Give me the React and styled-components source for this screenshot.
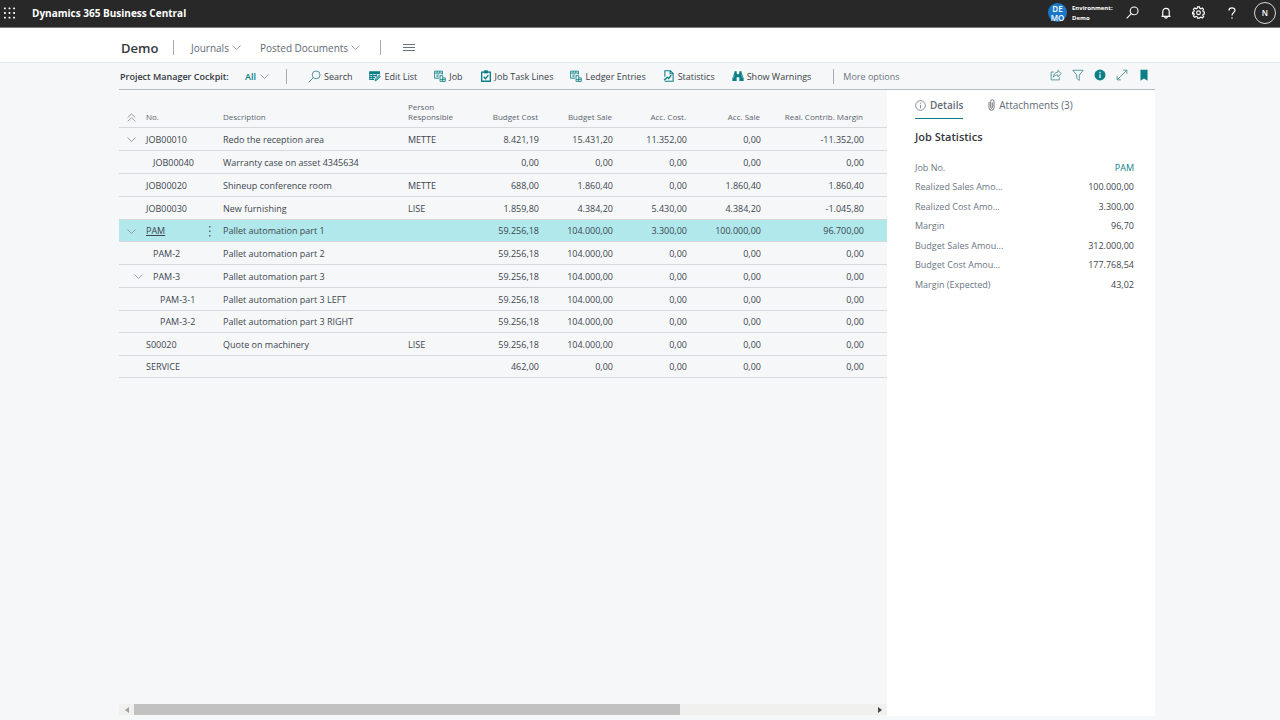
import React from "react";
import styled, { createGlobalStyle } from "styled-components";

const teal = "#0b7f86";
const grid = "#d5d8dc";

const GlobalStyle = createGlobalStyle`
  * { box-sizing: border-box; }
  body {
    margin: 0;
    background: #f5f7f9;
    color: #40464d;
    font-family: "Open Sans", "Noto Sans", sans-serif;
    font-size: 9px;
  }
  button {
    margin: 0;
    padding: 0;
    border: 0;
    background: none;
    color: inherit;
    font: inherit;
    cursor: pointer;
  }
`;

const Page = styled.div`
  display: flex;
  flex-direction: column;
  min-height: 100vh;
`;

const TopBar = styled.header`
  display: flex;
  align-items: center;
  height: 28px;
  padding: 0 4px 2px;
  background: #282828;
  border-bottom: 1px solid #77797b;
  color: #fff;
`;

const TopButton = styled.button`
  display: flex;
  align-items: center;
  justify-content: center;
  width: ${(p) => p.$width || 33}px;
  height: 24px;
`;

const Product = styled.h1`
  flex: 1;
  margin: 0 0 0 17px;
  font-size: 10px;
  line-height: 16px;
  font-weight: 700;
`;

const EnvBadge = styled.span`
  display: flex;
  flex-direction: column;
  align-items: center;
  justify-content: center;
  width: 19px;
  height: 19px;
  margin-right: 5px;
  border-radius: 50%;
  background: #1b78c8;
  font-size: 8px;
  line-height: 9px;
  font-weight: 600;
`;

const EnvText = styled.span`
  width: 44px;
  font-size: 6px;
  line-height: 10px;
  font-weight: 700;
`;

const Avatar = styled.button`
  width: 22px;
  height: 22px;
  margin-left: 6px;
  border: 1px solid #d8d8d8;
  border-radius: 50%;
  font-size: 8px;
  font-weight: 600;
`;

const NavBar = styled.nav`
  display: flex;
  align-items: center;
  height: 35px;
  padding: 5px 120px 0 121px;
  background: #fff;
  border-bottom: 1px solid #e6e9ec;
  color: #5f6a75;
  font-size: 10px;
`;

const Company = styled.span`
  width: 52px;
  color: #33383d;
  font-size: 13px;
  font-weight: 600;
`;

const Divider = styled.span`
  width: 1px;
  height: 15px;
  margin: 0 ${(p) => p.$gap}px 0 0;
  background: #a6abb1;
`;

const NavButton = styled.button`
  display: flex;
  align-items: center;
  gap: 3px;
  margin-right: ${(p) => p.$after || 0}px;
`;

const Main = styled.main`
  flex: 1;
  display: flex;
  flex-direction: column;
  padding: 0 125px 4px 119px;
`;

const Toolbar = styled.div`
  display: flex;
  align-items: center;
  height: 27px;
  border-bottom: 1px solid #b4bbc2;
  white-space: nowrap;
`;

const PageTitle = styled.span`
  width: 126px;
  padding-left: 1px;
  color: #33383d;
  font-weight: 600;
`;

const ViewButton = styled.button`
  display: flex;
  align-items: center;
  gap: 4px;
  margin-right: 17px;
  color: ${teal};
  font-weight: 600;
`;

const Actions = styled.div`
  display: flex;
  align-items: center;
  flex: 1;
`;

const ActionList = styled.div`
  display: flex;
  align-items: center;
  gap: ${(p) => p.$gap}px;
`;

const Action = styled.button`
  display: flex;
  align-items: center;
  gap: 3px;
  color: #3b4147;
`;

const MoreAction = styled.button`
  margin-left: 22px;
  padding-left: 9px;
  border-left: 1px solid #a6abb1;
  line-height: 15px;
  color: #6b747d;
`;

const PageTools = styled(ActionList)`
  padding: 0 5px 3px 0;
`;

const Content = styled.div`
  flex: 1;
  display: flex;
`;

const ListArea = styled.section`
  flex: 1;
  display: flex;
  flex-direction: column;
  justify-content: space-between;
  min-width: 0;
`;

const JobTable = styled.table`
  width: 100%;
  table-layout: fixed;
  border-collapse: separate;
  border-spacing: 0;
  line-height: 12px;
`;

const Col = styled.col`
  width: ${(p) => (p.$width ? `${p.$width}px` : "auto")};
`;

const Head = styled.th`
  height: 38px;
  padding: 0 ${(p) => (p.$right ? 1 : 0)}px 5px 0;
  border-bottom: 1px solid ${grid};
  color: #5c656e;
  font-size: 8px;
  line-height: 10px;
  font-weight: 400;
  text-align: ${(p) => (p.$right ? "right" : "left")};
  vertical-align: bottom;
  white-space: nowrap;
`;

const Row = styled.tr`
  height: 23px;
  background: ${(p) => (p.$selected ? "#b0e8eb" : "transparent")};
  &:nth-child(4n + 5), &:last-child { height: 22px; }
`;

const Cell = styled.td`
  padding: 1px 0 0;
  border-bottom: 1px solid ${grid};
  text-align: ${(p) => (p.$right ? "right" : "left")};
  white-space: nowrap;
`;

const Toggle = styled.button`
  display: block;
  margin-left: ${(p) => 8 + p.$level * 7}px;
  line-height: 0;
`;

const NumberCell = styled.div`
  display: flex;
  align-items: center;
  justify-content: space-between;
  padding: 0 12px 0 ${(p) => p.$level * 7}px;
`;

const JobLink = styled.a`
  color: inherit;
  text-decoration: ${(p) => (p.$selected ? "underline" : "none")};
`;

const ScrollBar = styled.div`
  display: flex;
  height: 11px;
  margin-bottom: 1px;
  background: #f0f0ef;
`;

const ScrollArrow = styled.button`
  display: flex;
  align-items: center;
  justify-content: center;
  width: 15px;
`;

const ScrollTrack = styled.div`
  flex: 1;
`;

const ScrollThumb = styled.div`
  width: 74%;
  height: 11px;
  background: #c1c1c1;
`;

const FactBox = styled.aside`
  width: 268px;
  padding: 7px 21px 0 28px;
  background: #fff;
`;

const Tabs = styled.div`
  display: flex;
  gap: 25px;
  color: #5f6a75;
  font-size: 10px;
  line-height: 16px;
`;

const Tab = styled.button`
  display: flex;
  align-items: center;
  gap: 4px;
  padding-bottom: 5px;
  border-bottom: 1px solid ${(p) => (p.$active ? teal : "transparent")};
  font-weight: ${(p) => (p.$active ? 600 : 400)};
`;

const FactTitle = styled.h2`
  margin: 10px 0 12px;
  color: #33383d;
  font-size: 11px;
  line-height: 16px;
  font-weight: 600;
`;

const Facts = styled.dl`
  margin: 0;
`;

const Fact = styled.div`
  display: flex;
  align-items: center;
  justify-content: space-between;
  height: 20px;
  &:nth-child(even) { height: 19px; }
`;

const FactLabel = styled.dt`
  color: #6b7681;
`;

const FactValue = styled.dd`
  margin: 0;
  a { color: ${teal}; text-decoration: none; }
`;

const Svg = ({ w = 12, h = w, box = "0 0 16 16", children, ...rest }) => (
  <svg width={w} height={h} viewBox={box} fill="none" stroke="currentColor" strokeWidth="1.3" aria-hidden="true" {...rest}>
    {children}
  </svg>
);

const Chevron = () => (
  <Svg w={9} h={5} box="0 0 9 5" stroke="#8b959e" strokeWidth="0.9"><path d="M.5.5l4 4 4-4" /></Svg>
);

const DoubleUp = () => (
  <Svg w={9} h={9} box="0 0 9 9" stroke="#8b959e" strokeWidth="0.9"><path d="M.7 4.5l3.8-3.6 3.8 3.6M.7 8.3l3.8-3.6 3.8 3.6" /></Svg>
);

const Waffle = () => (
  <Svg w={12} h={12} box="0 0 12 12" fill="#fff" stroke="none">
    {[0, 5, 10].map((y) => [0, 5, 10].map((x) => <rect key={`${x}-${y}`} x={x} y={y} width="2" height="2" rx=".6" />))}
  </Svg>
);

const Magnifier = (props) => (
  <Svg {...props}><circle cx="10" cy="6" r="4.8" /><path d="M6.5 9.5L.8 15.2" /></Svg>
);

const Bell = () => (
  <Svg w={12} strokeWidth="1.6"><path d="M2 12.5h12M3.7 12.5V6.2a4.3 4.3 0 018.6 0v6.3M6.3 13a1.7 1.7 0 003.4 0" /></Svg>
);

const Gear = () => (
  <Svg w={13} strokeWidth="1.4">
    <path d="M6.8 1h2.4l.4 1.9 1.3.6 1.7-1.1 1.7 1.7-1.1 1.7.6 1.3 1.9.4v2.2l-1.9.4-.6 1.3 1.1 1.7-1.7 1.7-1.7-1.1-1.3.6L9.2 15H6.8l-.4-1.7-1.3-.6-1.7 1.1-1.7-1.7 1.1-1.7-.6-1.3L.7 9.7V7.5l1.5-.4.6-1.3-1.1-1.7 1.7-1.7 1.7 1.1 1.3-.6z" />
    <circle cx="8" cy="8.3" r="2.3" />
  </Svg>
);

const Question = () => (
  <Svg w={8} h={12} box="0 0 8 12" strokeWidth="1.2"><path d="M1 3.5C1 1.7 2.3.8 4 .8s3 .9 3 2.500C7 5.500 4 5.700 4 8.500M4 10.200v1.500" /></Svg>
);

const EditListIcon = () => (
  <Svg w={12} stroke={teal} strokeWidth="1.4">
    <path d="M1 2.500h13v2H1z" fill={teal} />
    <path d="M1 3v9.500h6M1 7.500h10M1 10h7M5 4v8.500M9.500 4v5M14 4v2" />
    <path d="M8 14.500l1-3 4.500-4.500 1.800 1.800-4.500 4.500z" fill="#5fb3b8" strokeWidth="1" />
  </Svg>
);

const LedgerIcon = () => (
  <Svg w={12} stroke={teal} strokeWidth="1.1">
    <path d="M6.500 11H.8V1.500h10.400V6M.8 4.200h10.400M3 6.800h4M3 9h3M4.200 1.500v2.700M7.700 1.500v2.700" />
    <path d="M8 7.500h3.500v3H15v4.700H8zM11.500 10.500v4.700M8 12.800h7" />
  </Svg>
);

const ClipboardIcon = () => (
  <Svg w={12} stroke={teal} strokeWidth="1.8">
    <path d="M2.200 2.800h11.600v12.200H2.200z" /><path d="M5.500 1h5v3h-5z" fill={teal} strokeWidth="1" /><path d="M5 9l2.300 2.500L11.200 6.800" />
  </Svg>
);

const StatisticsIcon = () => (
  <Svg w={12} stroke={teal} strokeWidth="1.4">
    <path d="M2.500 9V1h7.300l3.700 3.700V15h-11M9.500 1v4h4" /><path d="M1.500 13.500l4.200-3.700 1.800 1.500 3.500-4.300" strokeWidth="1.8" />
  </Svg>
);

const BinocularsIcon = () => (
  <Svg w={12} fill={teal} stroke="none">
    <path d="M3.200 3.500V1.800h3v1.700l.7 2h2.200l.7-2V1.800h3v1.700L15.500 11v3.500H9.800V9.700H6.200v4.800H.5V11z" />
    <path d="M3 6.500L2 10.800M13 6.500l1 4.300" stroke="#9fd0d3" strokeWidth=".8" />
  </Svg>
);

const ShareIcon = () => (
  <Svg w={12} stroke="#4f9499" strokeWidth="1.2"><path d="M5 4H1.500v10.500h11V11M10.500 1.800L15 6l-4.500 4.200V8C7.500 7.800 5.800 8.700 4.500 11c0-4 2.300-6.500 6-6.800z" /></Svg>
);

const FilterIcon = () => (
  <Svg w={12} stroke="#4f9499" strokeWidth="1.2"><path d="M1 1.700h14L9.700 8v7.300L6.300 12.500V8z" /></Svg>
);

const InfoSolid = () => (
  <Svg w={12} stroke="none"><circle cx="8" cy="8" r="7.3" fill={teal} /><path d="M8 3.800v1.800M8 7v5" stroke="#fff" strokeWidth="1.6" /></Svg>
);

const ExpandIcon = () => (
  <Svg w={12} stroke="#4f9499" strokeWidth="1.2"><path d="M1.500 14.500l13-13M9.500 1.500h5v5M1.500 9.500v5h5" /></Svg>
);

const BookmarkIcon = () => (
  <Svg w={12} stroke="none"><path d="M3.300 1h9.400v14.500L8 12.500l-4.700 3z" fill={teal} /></Svg>
);

const InfoOutline = () => (
  <Svg w={11} stroke="#646c74" strokeWidth="1.1"><circle cx="8" cy="8" r="7" /><path d="M8 4v1.500M8 7v5" /></Svg>
);

const ClipIcon = () => (
  <Svg w={7} h={12} box="0 0 7 12" stroke="#646c74" strokeWidth=".9"><path d="M1 3v5.700a2.500 2.500 0 005 0V2.300a1.600 1.600 0 00-3.300 0v6.200a.8.8 0 001.600 0V3.500" /></Svg>
);

const actions = [
  ["Search", <Magnifier key="i" w={13} stroke="#3d8a90" strokeWidth="1.1" />],
  ["Edit List", <EditListIcon key="i" />],
  ["Job", <LedgerIcon key="i" />],
  ["Job Task Lines", <ClipboardIcon key="i" />],
  ["Ledger Entries", <LedgerIcon key="i" />],
  ["Statistics", <StatisticsIcon key="i" />],
  ["Show Warnings", <BinocularsIcon key="i" />],
];

const jobs = [
  { no: "JOB00010", text: "Redo the reception area", person: "METTE", open: true, level: 0, values: ["8.421,19", "15.431,20", "11.352,00", "0,00", "-11.352,00"] },
  { no: "JOB00040", text: "Warranty case on asset 4345634", level: 1, values: ["0,00", "0,00", "0,00", "0,00", "0,00"] },
  { no: "JOB00020", text: "Shineup conference room", person: "METTE", level: 0, values: ["688,00", "1.860,40", "0,00", "1.860,40", "1.860,40"] },
  { no: "JOB00030", text: "New furnishing", person: "LISE", level: 0, values: ["1.859,80", "4.384,20", "5.430,00", "4.384,20", "-1.045,80"] },
  { no: "PAM", text: "Pallet automation part 1", open: true, selected: true, level: 0, values: ["59.256,18", "104.000,00", "3.300,00", "100.000,00", "96.700,00"] },
  { no: "PAM-2", text: "Pallet automation part 2", level: 1, values: ["59.256,18", "104.000,00", "0,00", "0,00", "0,00"] },
  { no: "PAM-3", text: "Pallet automation part 3", open: true, level: 1, values: ["59.256,18", "104.000,00", "0,00", "0,00", "0,00"] },
  { no: "PAM-3-1", text: "Pallet automation part 3 LEFT", level: 2, values: ["59.256,18", "104.000,00", "0,00", "0,00", "0,00"] },
  { no: "PAM-3-2", text: "Pallet automation part 3 RIGHT", level: 2, values: ["59.256,18", "104.000,00", "0,00", "0,00", "0,00"] },
  { no: "S00020", text: "Quote on machinery", person: "LISE", level: 0, values: ["59.256,18", "104.000,00", "0,00", "0,00", "0,00"] },
  { no: "SERVICE", text: "", level: 0, values: ["462,00", "0,00", "0,00", "0,00", "0,00"] },
];

const facts = [
  ["Realized Sales Amo...", "100.000,00"],
  ["Realized Cost Amo...", "3.300,00"],
  ["Margin", "96,70"],
  ["Budget Sales Amou...", "312.000,00"],
  ["Budget Cost Amou...", "177.768,54"],
  ["Margin (Expected)", "43,02"],
];

export default function App() {
  return (
    <Page>
      <GlobalStyle />
      <TopBar>
        <TopButton $width={11} aria-label="App launcher"><Waffle /></TopButton>
        <Product>Dynamics 365 Business Central</Product>
        <EnvBadge><span>DE</span><span>MO</span></EnvBadge>
        <EnvText>Environment:<br />Demo</EnvText>
        <TopButton aria-label="Search"><Magnifier w={13} /></TopButton>
        <TopButton aria-label="Notifications"><Bell /></TopButton>
        <TopButton aria-label="Settings"><Gear /></TopButton>
        <TopButton aria-label="Help"><Question /></TopButton>
        <Avatar aria-label="Account">N</Avatar>
      </TopBar>

      <NavBar>
        <Company>Demo</Company>
        <Divider $gap={17} />
        <NavButton $after={19}>Journals<Chevron /></NavButton>
        <NavButton $after={20}>Posted Documents<Chevron /></NavButton>
        <Divider $gap={22} />
        <NavButton aria-label="Menu">
          <Svg w={12} h={8} box="0 0 12 8" stroke="#68737d" strokeWidth="1"><path d="M0 .5h12M0 3.500h12M0 6.500h12" /></Svg>
        </NavButton>
      </NavBar>

      <Main>
        <Toolbar>
          <PageTitle>Project Manager Cockpit:</PageTitle>
          <ViewButton>All<Chevron /></ViewButton>
          <Divider $gap={21} />
          <Actions>
            <ActionList $gap={17}>
              {actions.map(([label, icon]) => (
                <Action key={label}>{icon}{label}</Action>
              ))}
            </ActionList>
            <MoreAction>More options</MoreAction>
          </Actions>
          <PageTools $gap={10}>
            <Action aria-label="Share"><ShareIcon /></Action>
            <Action aria-label="Filter"><FilterIcon /></Action>
            <Action aria-label="Details pane"><InfoSolid /></Action>
            <Action aria-label="Expand"><ExpandIcon /></Action>
            <Action aria-label="Bookmark"><BookmarkIcon /></Action>
          </PageTools>
        </Toolbar>

        <Content>
          <ListArea>
            <JobTable>
              <colgroup>
                <Col $width={27} /><Col $width={77} /><Col /><Col $width={62} /><Col $width={69} />
                <Col $width={74} /><Col $width={74} /><Col $width={74} /><Col $width={103} /><Col $width={23} />
              </colgroup>
              <thead>
                <tr>
                  <Head><Toggle $level={0} aria-label="Collapse all"><DoubleUp /></Toggle></Head>
                  <Head>No.</Head>
                  <Head>Description</Head>
                  <Head>Person<br />Responsible</Head>
                  <Head $right>Budget Cost</Head>
                  <Head $right>Budget Sale</Head>
                  <Head $right>Acc. Cost.</Head>
                  <Head $right>Acc. Sale</Head>
                  <Head $right>Real. Contrib. Margin</Head>
                  <Head />
                </tr>
              </thead>
              <tbody>
                {jobs.map((job) => (
                  <Row key={job.no} $selected={job.selected}>
                    <Cell>{job.open && <Toggle $level={job.level} aria-label={`Collapse ${job.no}`}><Chevron /></Toggle>}</Cell>
                    <Cell>
                      <NumberCell $level={job.level}>
                        <JobLink href="#" $selected={job.selected}>{job.no}</JobLink>
                        {job.selected && (
                          <Svg w={3} h={11} box="0 0 3 11" fill="#4d6b70" stroke="none">
                            <rect x="1" y="0" width="1.5" height="1.5" /><rect x="1" y="4.5" width="1.5" height="1.5" /><rect x="1" y="9" width="1.5" height="1.5" />
                          </Svg>
                        )}
                      </NumberCell>
                    </Cell>
                    <Cell>{job.text}</Cell>
                    <Cell>{job.person}</Cell>
                    {job.values.map((value, i) => <Cell key={i} $right>{value}</Cell>)}
                    <Cell />
                  </Row>
                ))}
              </tbody>
            </JobTable>
            <ScrollBar>
              <ScrollArrow aria-label="Scroll left"><Svg w={4} h={6} box="0 0 4 6" fill="#a0a0a0" stroke="none"><path d="M4 0v6L0 3z" /></Svg></ScrollArrow>
              <ScrollTrack><ScrollThumb /></ScrollTrack>
              <ScrollArrow aria-label="Scroll right"><Svg w={4} h={6} box="0 0 4 6" fill="#484848" stroke="none"><path d="M0 0v6l4-3z" /></Svg></ScrollArrow>
            </ScrollBar>
          </ListArea>

          <FactBox>
            <Tabs role="tablist">
              <Tab role="tab" aria-selected="true" $active><InfoOutline />Details</Tab>
              <Tab role="tab" aria-selected="false"><ClipIcon />Attachments (3)</Tab>
            </Tabs>
            <FactTitle>Job Statistics</FactTitle>
            <Facts>
              <Fact><FactLabel>Job No.</FactLabel><FactValue><a href="#">PAM</a></FactValue></Fact>
              {facts.map(([label, value]) => (
                <Fact key={label}><FactLabel>{label}</FactLabel><FactValue>{value}</FactValue></Fact>
              ))}
            </Facts>
          </FactBox>
        </Content>
      </Main>
    </Page>
  );
}
